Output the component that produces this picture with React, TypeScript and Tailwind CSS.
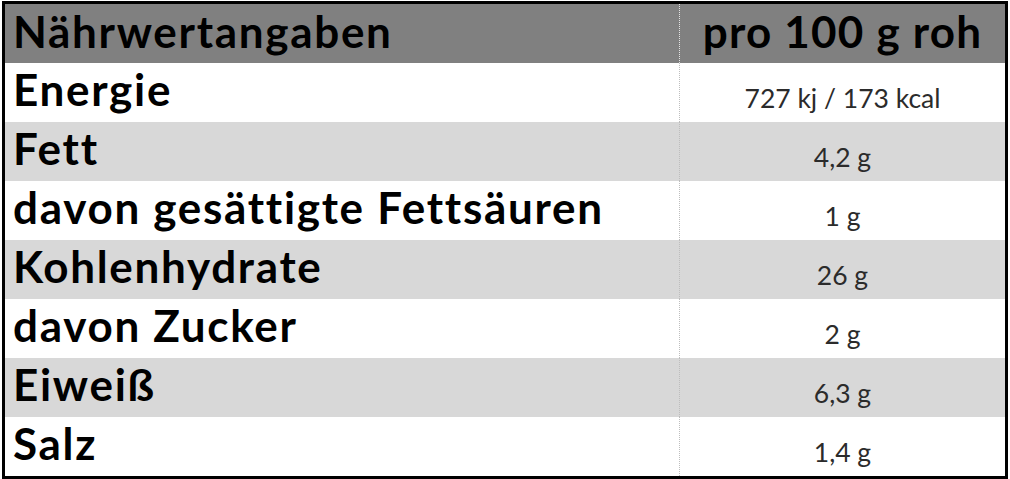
const rows: { label: string; value: string }[] = [
  { label: 'Energie', value: '727 kj / 173 kcal' },
  { label: 'Fett', value: '4,2 g' },
  { label: 'davon gesättigte Fettsäuren', value: '1 g' },
  { label: 'Kohlenhydrate', value: '26 g' },
  { label: 'davon Zucker', value: '2 g' },
  { label: 'Eiweiß', value: '6,3 g' },
  { label: 'Salz', value: '1,4 g' },
]

export default function App() {
  return (
    <div className="w-[1010px] h-[479px] bg-white pt-px pl-[2px]">
      <div
        className="w-[1006px] border-[3px] border-black"
        style={{ fontFamily: 'Lato, "Open Sans", sans-serif' }}
      >
        <div className="flex h-[59px] bg-[#808080] text-black font-bold text-[44px] tracking-[1.7px]">
          <div className="w-[674px] flex items-end pb-[6px] pl-[8px] leading-none">
            <span className="relative top-[-4px]">Nährwertangaben</span>
          </div>
          <div className="flex-1 border-l border-dotted border-[#e6e6e6] flex items-end justify-center leading-none">
            <span className="relative top-[-10px] tracking-[1.2px]">pro 100 g roh</span>
          </div>
        </div>
        {rows.map((row, i) => (
          <div
            key={row.label}
            className={`flex h-[59px] ${i % 2 === 1 ? 'bg-[#d8d8d8]' : 'bg-white'}`}
          >
            <div className="w-[674px] flex items-end pl-[8px] pb-[11px] leading-none text-black font-bold text-[44px] tracking-[1.7px]">
              {row.label}
            </div>
            <div className="flex-1 border-l border-dotted border-[#bdbdbd] flex items-end justify-center pb-[11px] leading-none text-[#2b2b2b] text-[26.5px]">
              {row.value}
            </div>
          </div>
        ))}
      </div>
    </div>
  )
}
